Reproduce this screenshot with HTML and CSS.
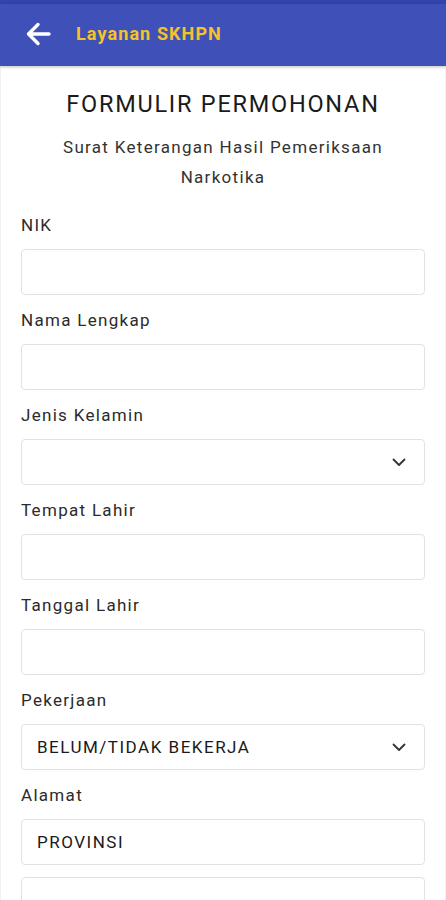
FILE: index.html
```html
<!DOCTYPE html>
<html lang="id">
<head>
<meta charset="utf-8">
<title>Layanan SKHPN</title>
<link rel="stylesheet" href="styles.css">
</head>
<body>
<div class="statusbar"></div>
<header class="appbar">
  <svg class="back" width="26" height="24" viewBox="0 0 26 24"><path d="M24 12H4M13 2.5L3.5 12L13 21.5" fill="none" stroke="#fff" stroke-width="3.4" stroke-linecap="round" stroke-linejoin="round"/></svg>
  <h1 class="apptitle">Layanan SKHPN</h1>
</header>
<main class="page">
  <h2 class="title">FORMULIR PERMOHONAN</h2>
  <p class="subtitle">Surat Keterangan Hasil Pemeriksaan<br>Narkotika</p>
  <div class="field first"><div class="label">NIK</div><div class="input"></div></div>
  <div class="field"><div class="label">Nama Lengkap</div><div class="input"></div></div>
  <div class="field"><div class="label">Jenis Kelamin</div><div class="input select"><span></span><svg class="chev" width="14" height="9" viewBox="0 0 14 9"><path d="M1.5 1.5L7 7L12.5 1.5" fill="none" stroke="#333" stroke-width="1.8" stroke-linecap="round" stroke-linejoin="round"/></svg></div></div>
  <div class="field"><div class="label">Tempat Lahir</div><div class="input"></div></div>
  <div class="field"><div class="label">Tanggal Lahir</div><div class="input"></div></div>
  <div class="field"><div class="label">Pekerjaan</div><div class="input select"><span>BELUM/TIDAK BEKERJA</span><svg class="chev" width="14" height="9" viewBox="0 0 14 9"><path d="M1.5 1.5L7 7L12.5 1.5" fill="none" stroke="#333" stroke-width="1.8" stroke-linecap="round" stroke-linejoin="round"/></svg></div></div>
  <div class="field"><div class="label">Alamat</div><div class="input"><span>PROVINSI</span></div><div class="input gap"></div></div>
</main>
</body>
</html>
```
FILE: styles.css
```css
* { box-sizing: border-box; }
html, body { margin: 0; padding: 0; }
body {
  font-family: Roboto, "Noto Sans", sans-serif;
  background: #ffffff;
  color: #222;
  width: 446px;
  overflow: hidden;
}
.statusbar {
  height: 4px;
  background: #3444ad;
}
.appbar {
  height: 62px;
  background: #3f51b9;
  display: flex;
  align-items: center;
  padding-left: 25px;
  padding-bottom: 3px;
  box-shadow: 0 1px 3px rgba(0,0,0,0.25);
  position: relative;
}
.back { display: block; margin-right: 25px; }
.apptitle {
  margin: 0;
  font-size: 18px;
  font-weight: 700;
  letter-spacing: 1.1px;
  color: #f6c229;
}
.page {
  padding: 21px 20px 0 20px;
  border-left: 1px solid #f1f1f1;
  border-right: 1px solid #f1f1f1;
  min-height: 834px;
}
.title {
  margin: 0;
  text-align: center;
  font-size: 23.5px;
  font-weight: 400;
  letter-spacing: 1.75px;
  color: #1a1a1a;
  line-height: 34px;
}
.subtitle {
  margin: 11px 0 0 0;
  text-align: center;
  font-size: 17px;
  letter-spacing: 1.3px;
  line-height: 30px;
  color: #333;
}
.field { margin-top: 13px; }
.field.first { margin-top: 21px; }
.label {
  font-size: 17px;
  letter-spacing: 1.3px;
  line-height: 24px;
  color: #2b2b2b;
  margin-bottom: 12px;
}
.input {
  height: 46px;
  border: 1px solid #e2e2e2;
  border-radius: 4px;
  background: #fff;
  display: flex;
  align-items: center;
  justify-content: space-between;
  padding: 0 18px 0 15px;
  font-size: 17px;
  letter-spacing: 1.5px;
  color: #1a1a1a;
}
.input.gap { margin-top: 12px; }
.chev { display: block; }
```
